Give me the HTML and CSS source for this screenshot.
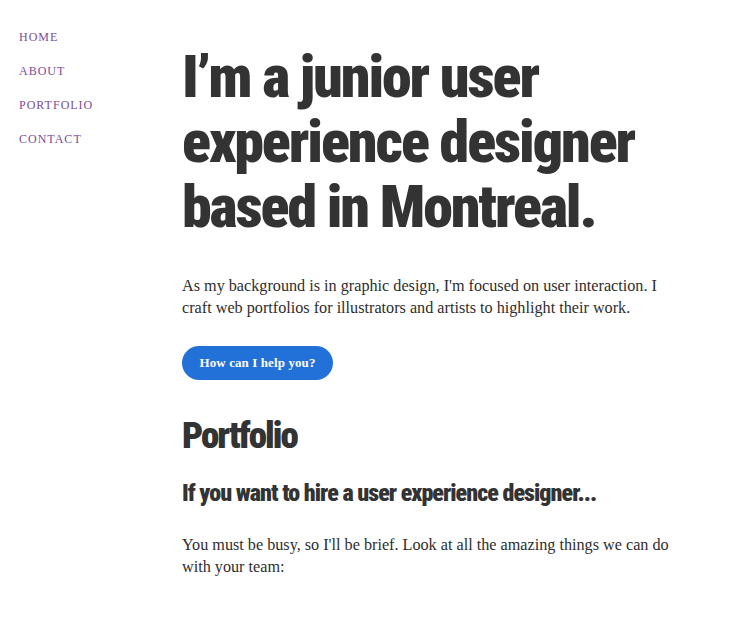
FILE: index.html
```html
<!DOCTYPE html>
<html lang="en">
<head>
<meta charset="utf-8">
<title>Portfolio</title>
<link rel="stylesheet" href="styles.css">
</head>
<body>
<div class="page">
  <nav class="nav">
    <a href="#" class="nav-link">Home</a>
    <a href="#" class="nav-link">About</a>
    <a href="#" class="nav-link">Portfolio</a>
    <a href="#" class="nav-link">Contact</a>
  </nav>
  <main class="main">
    <h1 class="hero-title">I’m a junior user experience designer based in Montreal.</h1>
    <p class="text">As my background is in graphic design, I'm focused on user interaction. I craft web portfolios for illustrators and artists to highlight their work.</p>
    <a href="#" class="btn">How can I help you?</a>
    <h2 class="section-title">Portfolio</h2>
    <h3 class="sub-title">If you want to hire a user experience designer...</h3>
    <p class="text">You must be busy, so I'll be brief. Look at all the amazing things we can do with your team:</p>
  </main>
</div>
</body>
</html>
```
FILE: styles.css
```css
html, body {
  margin: 0;
  padding: 0;
  background: #fff;
}
.page {
  display: flex;
  align-items: flex-start;
  padding-left: 19px;
  padding-top: 30px;
}
.nav {
  display: flex;
  flex-direction: column;
  gap: 19px;
  width: 163px;
  flex: none;
}
.nav-link {
  font-family: "Liberation Serif", serif;
  font-size: 12px;
  line-height: 15px;
  letter-spacing: 1px;
  text-transform: uppercase;
  color: #7a4c9a;
  text-decoration: none;
}
.main {
  width: 490px;
  padding-top: 14px;
  color: #333;
}
.hero-title {
  margin: 0;
  font-family: "Roboto", sans-serif;
  font-stretch: condensed;
  font-weight: 900;
  font-size: 60px;
  line-height: 65px;
  letter-spacing: -2.1px;
  color: #333;
}
.text {
  font-family: "Liberation Serif", serif;
  font-size: 16.2px;
  line-height: 21.5px;
  margin: 37px 0 0;
  color: #2e2e2e;
}
.btn {
  display: inline-flex;
  align-items: center;
  justify-content: center;
  margin-top: 27px;
  width: 151px;
  height: 34px;
  border-radius: 17px;
  background: #2271d8;
  color: #fff;
  font-family: "Liberation Serif", serif;
  font-size: 13px;
  font-weight: 600;
  letter-spacing: 0.1px;
  text-decoration: none;
}
.section-title {
  margin: 35px 0 0;
  font-family: "Roboto", sans-serif;
  font-stretch: condensed;
  font-weight: 900;
  font-size: 37px;
  line-height: 42px;
  letter-spacing: -2px;
  color: #333;
}
.sub-title {
  margin: 22px 0 0;
  font-family: "Roboto", sans-serif;
  font-stretch: condensed;
  font-weight: 900;
  font-size: 24px;
  line-height: 28px;
  letter-spacing: -0.95px;
  color: #333;
}
.sub-title + .text {
  margin-top: 28px;
}
```
